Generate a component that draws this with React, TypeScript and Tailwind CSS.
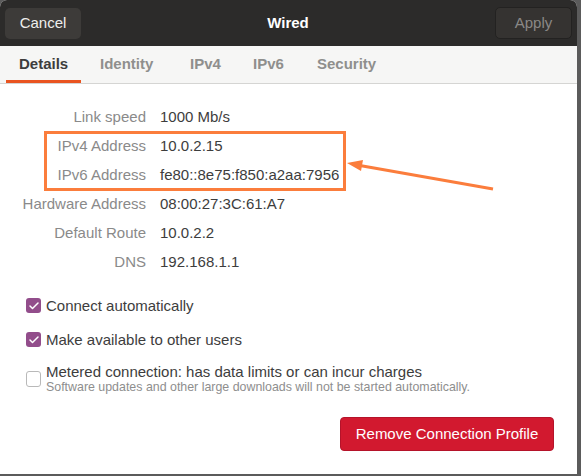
import { Check } from "lucide-react";

type Row = { label: string; value: string };

const rows: Row[] = [
  { label: "Link speed", value: "1000 Mb/s" },
  { label: "IPv4 Address", value: "10.0.2.15" },
  { label: "IPv6 Address", value: "fe80::8e75:f850:a2aa:7956" },
  { label: "Hardware Address", value: "08:00:27:3C:61:A7" },
  { label: "Default Route", value: "10.0.2.2" },
  { label: "DNS", value: "192.168.1.1" },
];

// tab label + its slot width in the strip
const tabs = [
  { label: "Details", cls: "ml-[6px] w-[75px] pl-[13px]" },
  { label: "Identity", cls: "ml-[19px] w-[90px]" },
  { label: "IPv4", cls: "w-[63px]" },
  { label: "IPv6", cls: "w-[64px]" },
  { label: "Security", cls: "w-[80px]" },
];

function CheckRow({ checked, label, hint }: { checked: boolean; label: string; hint?: string }) {
  return (
    <div className="flex items-start gap-[5px]">
      {checked ? (
        <span className="mt-[2px] flex h-[15px] w-[15px] shrink-0 items-center justify-center rounded-[3px] bg-[#924d8b]">
          <Check size={12} strokeWidth={3} className="text-white" />
        </span>
      ) : (
        <span className="mt-[9px] h-[16px] w-[15px] shrink-0 rounded-[3px] border border-[#b9b9b9] bg-white" />
      )}
      <div>
        <div className="text-[15px] leading-[19px] text-[#3d3d3d]">{label}</div>
        {hint ? <div className="text-[12.4px] leading-[13px] text-[#8e8e8e]">{hint}</div> : null}
      </div>
    </div>
  );
}

export default function App() {
  return (
    <div
      className="flex h-[476px] w-[581px] bg-[#5b5b5b] pb-[2px] pr-[4px]"
      style={{ fontFamily: '"Liberation Sans", "Noto Sans", sans-serif' }}
    >
      <div className="flex flex-1 flex-col overflow-hidden rounded-t-[7px] bg-white">
        {/* header bar */}
        <div className="flex h-[46px] items-center justify-between bg-[#2c2b2a] px-[5px]">
          <button className="h-[31px] w-[76px] rounded-[5px] bg-[#3d3b39] text-[15px] text-[#eeeeec]">Cancel</button>
          <div className="text-[15px] font-bold text-white">Wired</div>
          <button className="h-[32px] w-[77px] rounded-[5px] border border-[#232221] bg-[#353331] text-[15px] text-[#8a8886]">
            Apply
          </button>
        </div>

        {/* tabs */}
        <div className="flex h-[38px] items-end border-b border-[#d5d5d3] bg-[#f6f6f5]">
          {tabs.map((t, i) => (
            <div
              key={t.label}
              className={
                (i === 0
                  ? "border-[#e95420] text-[#3d3d3d] "
                  : "border-transparent text-[#8f8f8d] ") +
                "flex h-full items-center border-b-[3px] pt-[3px] text-[15px] font-bold " +
                t.cls
              }
            >
              {t.label}
            </div>
          ))}
        </div>

        {/* details */}
        <div className="relative flex-1">
          <div className="flex flex-col pt-[19px]">
            {rows.map((r) => (
              <div key={r.label} className="flex h-[29px] items-center gap-[14px]">
                <div className="w-[146px] text-right text-[15px] text-[#8a8a8a]">{r.label}</div>
                <div className="text-[15px] text-[#3d3d3d]">{r.value}</div>
              </div>
            ))}
          </div>

          <div className="mt-[19px] flex flex-col pl-[26px]">
            <CheckRow checked label="Connect automatically" />
            <div className="mt-[15px]">
              <CheckRow checked label="Make available to other users" />
            </div>
            <div className="mt-[13px]">
              <CheckRow
                checked={false}
                label="Metered connection: has data limits or can incur charges"
                hint="Software updates and other large downloads will not be started automatically."
              />
            </div>
          </div>

          <div className="mt-[23px] flex justify-end pr-[23px]">
            <button className="h-[34px] w-[214px] rounded-[4px] border border-[#b5132a] bg-[#d2192f] text-[15px] text-white">
              Remove Connection Profile
            </button>
          </div>

          {/* annotation */}
          <div className="absolute left-[44px] top-[47px] h-[60px] w-[302px] border-[3px] border-[#fb7d3c]" />
          <svg className="absolute left-[342px] top-[70px]" width="160" height="40" viewBox="0 0 160 40">
            <line x1="151" y1="35" x2="15" y2="11" stroke="#fb7d3c" strokeWidth="3" />
            <polygon points="5,9 21,6 19,17" fill="#fb7d3c" />
          </svg>
        </div>
      </div>
    </div>
  );
}
